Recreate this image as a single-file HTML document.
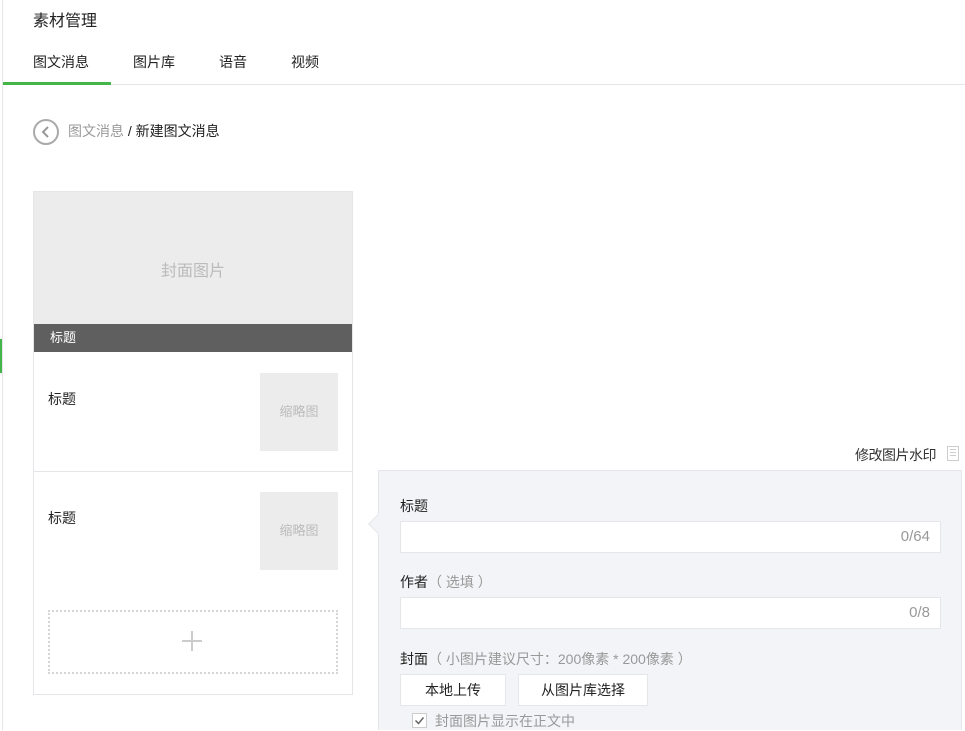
<!DOCTYPE html>
<html><head><meta charset="utf-8"><style>
*{margin:0;padding:0;box-sizing:border-box}
body{width:965px;height:730px;overflow:hidden;background:#fff;font-family:"Liberation Sans","Noto Sans CJK SC",sans-serif;font-size:14px;color:#353535;position:relative}
.a{position:absolute}
</style></head><body>
<div class="a" style="left:2px;top:0;width:1px;height:730px;background:#e4e6ea"></div>
<div class="a" style="left:0;top:339px;width:2px;height:34px;background:#44b549"></div>
<div class="a" style="left:33px;top:7px;font-size:16px;color:#222">素材管理</div>
<div class="a" style="left:33px;top:52px;color:#222">图文消息</div>
<div class="a" style="left:133px;top:52px;color:#222">图片库</div>
<div class="a" style="left:219px;top:52px;color:#222">语音</div>
<div class="a" style="left:291px;top:52px;color:#222">视频</div>
<div class="a" style="left:3px;top:84px;width:962px;height:1px;background:#e4e6ea"></div>
<div class="a" style="left:3px;top:82px;width:108px;height:3px;background:#44b549"></div>
<div class="a" style="left:33px;top:119px;width:26px;height:26px;border:2px solid #aaa;border-radius:50%"></div>
<svg class="a" style="left:33px;top:119px" width="26" height="26"><path d="M15 8 L10 13 L15 18" fill="none" stroke="#999" stroke-width="2"/></svg>
<div class="a" style="left:68px;top:121px;font-size:14px;color:#999">图文消息 <span style="color:#222">/ 新建图文消息</span></div>

<div class="a" style="left:33px;top:191px;width:320px;height:504px;border:1px solid #e4e6ea"></div>
<div class="a" style="left:34px;top:192px;width:318px;height:132px;background:#ececec;color:#bbb;font-size:16px;text-align:center;line-height:160px">封面图片</div>
<div class="a" style="left:34px;top:324px;width:318px;height:28px;background:#5f5f5f;color:#fff;font-size:13px;line-height:28px;padding-left:16px">标题</div>
<div class="a" style="left:34px;top:471px;width:318px;height:1px;background:#e4e6ea"></div>
<div class="a" style="left:48px;top:389px;font-size:14px;color:#222">标题</div>
<div class="a" style="left:260px;top:373px;width:78px;height:78px;background:#ececec;color:#bbb;font-size:13px;text-align:center;line-height:78px">缩略图</div>
<div class="a" style="left:48px;top:508px;font-size:14px;color:#222">标题</div>
<div class="a" style="left:260px;top:492px;width:78px;height:78px;background:#ececec;color:#bbb;font-size:13px;text-align:center;line-height:78px">缩略图</div>
<div class="a" style="left:48px;top:610px;width:290px;height:64px;border:2px dotted #d6d6d6"></div>
<div class="a" style="left:182px;top:640px;width:20px;height:2px;background:#ccc"></div>
<div class="a" style="left:191px;top:631px;width:2px;height:20px;background:#ccc"></div>

<div class="a" style="left:855px;top:445px;font-size:14px;color:#333;letter-spacing:-0.5px">修改图片水印</div>
<div class="a" style="left:947px;top:446px;width:12px;height:15px;border:1px solid #ccc;background:repeating-linear-gradient(#fff 0 2px,#ccc 2px 3px);background-clip:content-box;padding:2px"></div>
<div class="a" style="left:378px;top:470px;width:584px;height:260px;background:#f3f4f7;border:1px solid #e4e6ea;border-bottom:0"></div>
<div class="a" style="left:371px;top:517px;width:14px;height:14px;background:#f3f4f7;transform:rotate(45deg);border-left:1px solid #e4e6ea;border-bottom:1px solid #e4e6ea"></div>
<div class="a" style="left:400px;top:496px;font-size:14px;color:#222">标题</div>
<div class="a" style="left:400px;top:521px;width:541px;height:32px;background:#fff;border:1px solid #e4e6ea;text-align:right;padding-right:10px;line-height:30px;color:#999;font-size:15px">0/64</div>
<div class="a" style="left:400px;top:572px;font-size:14px;color:#222">作者<span style="color:#999">（ 选填 ）</span></div>
<div class="a" style="left:400px;top:597px;width:541px;height:32px;background:#fff;border:1px solid #e4e6ea;text-align:right;padding-right:10px;line-height:30px;color:#999;font-size:15px">0/8</div>
<div class="a" style="left:400px;top:649px;font-size:14px;color:#222">封面<span style="color:#999">（ 小图片建议尺寸：200像素 * 200像素 ）</span></div>
<div class="a" style="left:400px;top:674px;width:106px;height:32px;background:#fff;border:1px solid #e4e6ea;text-align:center;line-height:30px;font-size:14px;color:#222">本地上传</div>
<div class="a" style="left:518px;top:674px;width:130px;height:32px;background:#fff;border:1px solid #e4e6ea;text-align:center;line-height:30px;font-size:14px;color:#222">从图片库选择</div>
<div class="a" style="left:412px;top:713px;width:15px;height:15px;background:#fff;border:1px solid #ccc"></div>
<svg class="a" style="left:412px;top:713px" width="15" height="15"><path d="M3.5 7.5 L6.5 10.5 L11.5 4.5" fill="none" stroke="#666" stroke-width="1.5"/></svg>
<div class="a" style="left:435px;top:711px;font-size:14px;color:#999">封面图片显示在正文中</div>
</body></html>
